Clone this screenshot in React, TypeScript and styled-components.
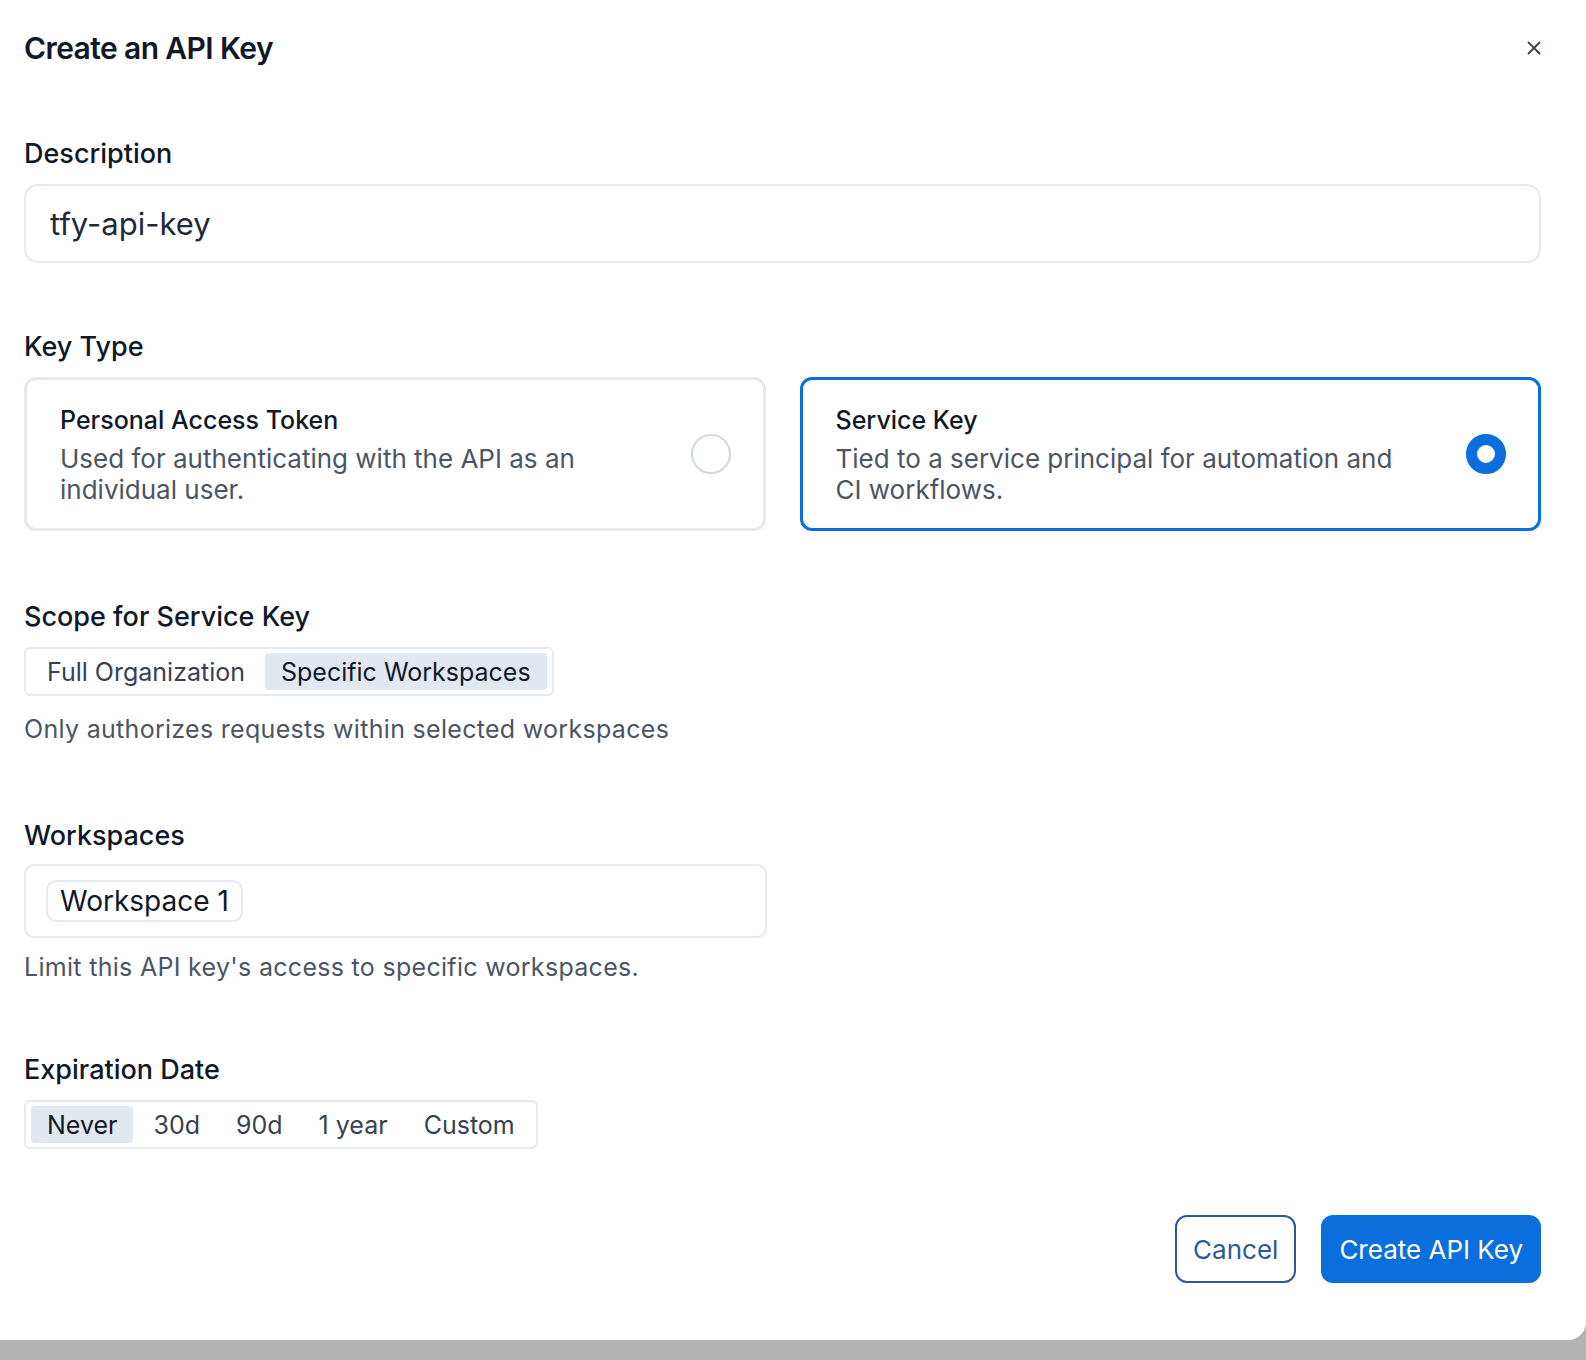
import React from "react";
import styled, { createGlobalStyle } from "styled-components";

const Global = createGlobalStyle`
  html, body { margin: 0; padding: 0; background: #b3b3b3; }
  body { font-family: Inter, "Noto Sans", sans-serif; color: #111827; }
  * { box-sizing: border-box; }
`;

const Modal = styled.div`
  width: 1586px;
  height: 1340px;
  background: #fff;
  border-bottom-right-radius: 18px;
  padding: 26px 45px 0 24px;
  display: flex;
  flex-direction: column;
`;
const Header = styled.div`
  display: flex;
  justify-content: space-between;
  align-items: center;
  height: 44px;
`;
const Title = styled.h1`
  margin: 0;
  font-size: 30px;
  font-weight: 600;
  letter-spacing: -0.6px;
  color: #111827;
`;
const Close = styled.button`
  border: none;
  background: none;
  padding: 0;
  margin-right: -4px;
  display: flex;
  color: #374151;
`;
const Label = styled.div<{ $mt: number }>`
  margin-top: ${(p) => p.$mt}px;
  font-size: 27px;
  font-weight: 500;
  color: #111827;
  line-height: 32px;
`;
const Input = styled.div`
  margin-top: 14px;
  height: 79px;
  border: 2px solid #e5e9f0;
  border-radius: 14px;
  display: flex;
  align-items: center;
  padding: 0 24px;
  font-size: 31px;
  color: #1f2937;
`;
const Cards = styled.div`
  margin-top: 14px;
  display: grid;
  grid-template-columns: 1fr 1fr;
  gap: 34px;
`;
const Card = styled.div<{ $active?: boolean }>`
  height: 154px;
  border: 3px solid ${(p) => (p.$active ? "#0a6fdc" : "#e5e9f0")};
  border-radius: 12px;
  display: flex;
  align-items: center;
  justify-content: space-between;
  padding: 0 32px 0 33px;
`;
const CardText = styled.div`
  display: flex;
  flex-direction: column;
  max-width: 580px;
  padding-top: 2px;
`;
const CardTitle = styled.div`
  font-size: 25px;
  font-weight: 500;
  color: #111827;
  line-height: 30px;
`;
const CardDesc = styled.div`
  font-size: 26px;
  color: #4b5563;
  line-height: 31px;
  margin-top: 8px;
`;
const Radio = styled.div<{ $on?: boolean }>`
  width: 40px;
  height: 40px;
  border-radius: 50%;
  flex-shrink: 0;
  border: ${(p) => (p.$on ? "11px solid #0a6fdc" : "2px solid #d1d8e2")};
  background: #fff;
`;
const Seg = styled.div`
  margin-top: 14px;
  align-self: flex-start;
  display: flex;
  gap: 4px;
  padding: 4px 5px;
  border: 2px solid #e5e9f0;
  border-radius: 6px;
  height: 49px;
`;
const SegItem = styled.div<{ $on?: boolean }>`
  display: flex;
  align-items: center;
  padding: 0 16px;
  font-size: 25px;
  border-radius: 4px;
  color: ${(p) => (p.$on ? "#111827" : "#374151")};
  background: ${(p) => (p.$on ? "#e2e8f0" : "transparent")};
`;
const Help = styled.div<{ $mt: number }>`
  margin-top: ${(p) => p.$mt}px;
  font-size: 25px;
  color: #4b5563;
  letter-spacing: 0.3px;
`;
const WsInput = styled.div`
  margin-top: 12px;
  width: 743px;
  height: 74px;
  border: 2px solid #e5e9f0;
  border-radius: 10px;
  display: flex;
  align-items: center;
  padding: 0 20px;
`;
const Chip = styled.div`
  height: 42px;
  padding: 0 12px;
  border: 2px solid #e5e9f0;
  border-radius: 10px;
  display: flex;
  align-items: center;
  font-size: 28px;
  color: #111827;
`;
const Footer = styled.div`
  margin-top: 66px;
  display: flex;
  justify-content: flex-end;
  gap: 25px;
`;
const Btn = styled.button<{ $primary?: boolean }>`
  height: 68px;
  padding: 0 16px;
  border-radius: 12px;
  font-family: Inter, sans-serif;
  font-size: 26px;
  border: 2px solid ${(p) => (p.$primary ? "#0a6fdc" : "#2b5a9c")};
  background: ${(p) => (p.$primary ? "#0a6fdc" : "#fff")};
  color: ${(p) => (p.$primary ? "#fff" : "#2b5a9c")};
`;

export default function App() {
  return (
    <>
      <Global />
      <Modal>
        <Header>
          <Title>Create an API Key</Title>
          <Close aria-label="close">
            <svg width="22" height="22" viewBox="0 0 24 24" fill="none" stroke="currentColor" strokeWidth="2" strokeLinecap="round">
              <path d="M6 6l12 12M18 6L6 18" />
            </svg>
          </Close>
        </Header>
        <Label $mt={68}>Description</Label>
        <Input>tfy-api-key</Input>
        <Label $mt={68}>Key Type</Label>
        <Cards>
          <Card>
            <CardText>
              <CardTitle>Personal Access Token</CardTitle>
              <CardDesc>Used for authenticating with the API as an individual user.</CardDesc>
            </CardText>
            <Radio />
          </Card>
          <Card $active>
            <CardText>
              <CardTitle>Service Key</CardTitle>
              <CardDesc>Tied to a service principal for automation and CI workflows.</CardDesc>
            </CardText>
            <Radio $on />
          </Card>
        </Cards>
        <Label $mt={70}>Scope for Service Key</Label>
        <Seg>
          <SegItem>Full Organization</SegItem>
          <SegItem $on>Specific Workspaces</SegItem>
        </Seg>
        <Help $mt={18}>Only authorizes requests within selected workspaces</Help>
        <Label $mt={76}>Workspaces</Label>
        <WsInput>
          <Chip>Workspace 1</Chip>
        </WsInput>
        <Help $mt={14}>Limit this API key's access to specific workspaces.</Help>
        <Label $mt={72}>Expiration Date</Label>
        <Seg>
          <SegItem $on>Never</SegItem>
          <SegItem>30d</SegItem>
          <SegItem>90d</SegItem>
          <SegItem>1 year</SegItem>
          <SegItem>Custom</SegItem>
        </Seg>
        <Footer>
          <Btn>Cancel</Btn>
          <Btn $primary>Create API Key</Btn>
        </Footer>
      </Modal>
    </>
  );
}
